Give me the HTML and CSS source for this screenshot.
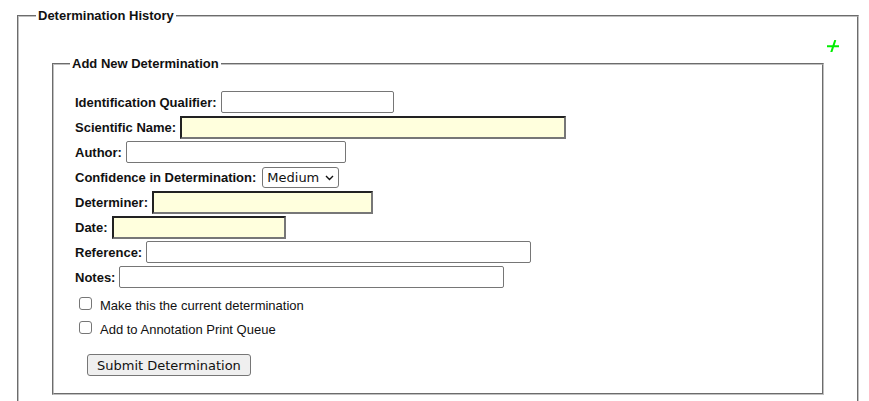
FILE: index.html
```html
<!DOCTYPE html>
<html>
<head>
<meta charset="utf-8">
<link rel="stylesheet" href="styles.css">
</head>
<body>
<fieldset class="history">
  <legend class="legend">Determination History</legend>
  <div class="add-row">
    <svg class="add-icon" width="12" height="12" viewBox="0 0 12 12" aria-label="add">
      <path d="M1 6.2 H11 M8 1 L4.5 11.5" stroke="#00ee00" stroke-width="2" fill="none" stroke-linecap="square"/>
    </svg>
  </div>
  <fieldset class="new-det">
    <legend class="legend">Add New Determination</legend>
    <div class="form">
      <div class="row"><label class="lbl">Identification Qualifier:</label><input class="txt w-qual" type="text"></div>
      <div class="row"><label class="lbl">Scientific Name:</label><input class="txt req w-sci" type="text"></div>
      <div class="row"><label class="lbl">Author:</label><input class="txt w-author" type="text"></div>
      <div class="row"><label class="lbl">Confidence in Determination:</label>
        <span class="sel-wrap">
          <select class="sel"><option>Medium</option></select>
          <svg class="chev" width="9" height="6" viewBox="0 0 9 6"><path d="M1 1 L4.5 4.5 L8 1" stroke="#111" stroke-width="1.4" fill="none"/></svg>
        </span>
      </div>
      <div class="row"><label class="lbl">Determiner:</label><input class="txt req w-det" type="text"></div>
      <div class="row"><label class="lbl">Date:</label><input class="txt req w-date" type="text"></div>
      <div class="row"><label class="lbl">Reference:</label><input class="txt w-ref" type="text"></div>
      <div class="row"><label class="lbl">Notes:</label><input class="txt w-notes" type="text"></div>
      <label class="check"><input class="cb" type="checkbox"><span class="check-text">Make this the current determination</span></label>
      <label class="check"><input class="cb" type="checkbox"><span class="check-text">Add to Annotation Print Queue</span></label>
      <div class="btn-row"><button class="btn" type="button">Submit Determination</button></div>
    </div>
  </fieldset>
</fieldset>
</body>
</html>
```
FILE: styles.css
```css
html, body { background: #fff; }
body {
  margin: 8px;
  font-family: "Liberation Sans", Arial, sans-serif;
  font-size: 13px;
  color: #111;
}
.history {
  margin: 0 2px 0 9px;
  padding: 0 17px 30px 17px;
  border: 2px groove #c0c0c0;
}
.legend {
  font-weight: bold;
  font-size: 13px;
  padding: 0 2px;
}
.add-row {
  display: flex;
  justify-content: flex-end;
  padding-right: 1px;
  margin-top: 17px;
  height: 12px;
}
.add-icon { display: block; }
.new-det {
  margin: 4px 16px 0 16px;
  padding: 0 16px 17px 16px;
  border: 2px groove #c0c0c0;
}
.form {
  display: flex;
  flex-direction: column;
  padding-left: 5px;
  padding-top: 20px;
}
.row {
  display: flex;
  align-items: center;
  gap: 4px;
  height: 22px;
  margin-bottom: 3px;
}
.lbl { font-weight: bold; }
.txt {
  box-sizing: border-box;
  height: 22px;
  border: 1px solid #767676;
  border-radius: 2px;
  padding: 1px 2px;
  margin: 0;
  font-size: 13px;
  background: #fff;
}
.req {
  border: 2px solid;
  border-color: #222 #777 #777 #222;
  border-radius: 0;
  background: #ffffdd;
  height: 23px;
}
.w-qual { width: 173px; }
.w-sci { width: 386px; }
.w-author { width: 220px; }
.w-det { width: 221px; }
.w-date { width: 174px; }
.w-ref { width: 385px; }
.w-notes { width: 385px; }
.sel-wrap { position: relative; display: inline-block; margin-left: 2px; }
.sel {
  appearance: none;
  -webkit-appearance: none;
  box-sizing: border-box;
  width: 77px;
  height: 21px;
  margin: 0;
  padding: 0 0 0 4px;
  border: 1px solid #767676;
  border-radius: 3px;
  background: #fff;
  font-family: "DejaVu Sans", Verdana, sans-serif;
  font-size: 13px;
  color: #111;
}
.chev {
  position: absolute;
  right: 5px;
  top: 8px;
  pointer-events: none;
}
.check {
  display: flex;
  align-items: center;
  height: 24px;
}
.check-text { padding-top: 5px; }
.cb {
  appearance: none;
  -webkit-appearance: none;
  box-sizing: border-box;
  width: 13px;
  height: 13px;
  margin: 0 8px 0 4px;
  border: 1px solid #767676;
  border-radius: 3px;
  background: #fff;
}
.btn-row { padding: 15px 0 0 12px; }
.btn {
  box-sizing: border-box;
  height: 22px;
  padding: 0 9px;
  border: 1px solid #767676;
  border-radius: 3px;
  background: #efefef;
  font-family: "DejaVu Sans", Verdana, sans-serif;
  font-size: 13px;
  color: #111;
}
```
